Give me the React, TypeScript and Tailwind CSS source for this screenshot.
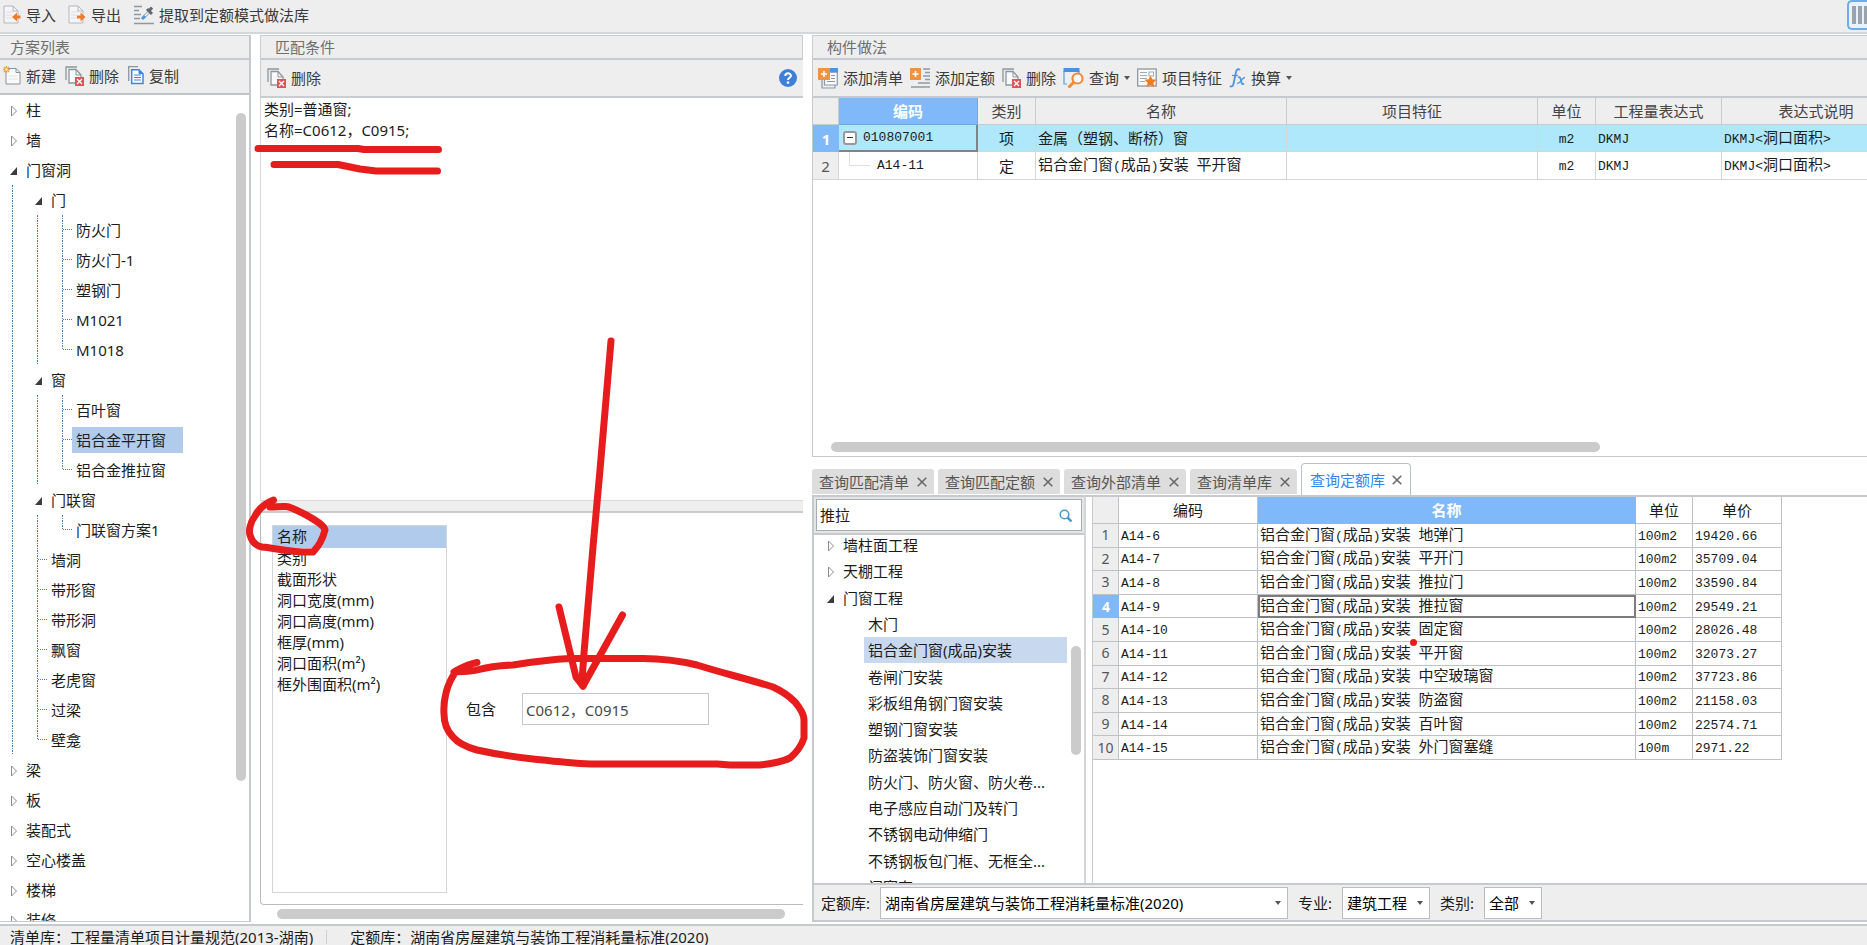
import React from 'react';

type TreeRow = {
  label: string;
  // one letter per indent cell: v = line, t = tee, l = elbow, c = closed arrow, o = open arrow, b = blank
  cells: string;
  active?: boolean;
};

type PriceRow = {
  code: string;
  name: string;
  unit: string;
  price: string;
};

const schemeRows: TreeRow[] = [
  { label: '柱', cells: 'c' },
  { label: '墙', cells: 'c' },
  { label: '门窗洞', cells: 'o' },
  { label: '门', cells: 'vo' },
  { label: '防火门', cells: 'vvt' },
  { label: '防火门-1', cells: 'vvt' },
  { label: '塑钢门', cells: 'vvt' },
  { label: 'M1021', cells: 'vvt' },
  { label: 'M1018', cells: 'vvl' },
  { label: '窗', cells: 'vo' },
  { label: '百叶窗', cells: 'vvt' },
  { label: '铝合金平开窗', cells: 'vvt', active: true },
  { label: '铝合金推拉窗', cells: 'vvl' },
  { label: '门联窗', cells: 'vo' },
  { label: '门联窗方案1', cells: 'vvl' },
  { label: '墙洞', cells: 'vt' },
  { label: '带形窗', cells: 'vt' },
  { label: '带形洞', cells: 'vt' },
  { label: '飘窗', cells: 'vt' },
  { label: '老虎窗', cells: 'vt' },
  { label: '过梁', cells: 'vt' },
  { label: '壁龛', cells: 'vl' },
  { label: '梁', cells: 'c' },
  { label: '板', cells: 'c' },
  { label: '装配式', cells: 'c' },
  { label: '空心楼盖', cells: 'c' },
  { label: '楼梯', cells: 'c' },
  { label: '装修', cells: 'c' },
];

const chapterRows: TreeRow[] = [
  { label: '墙柱面工程', cells: 'c' },
  { label: '天棚工程', cells: 'c' },
  { label: '门窗工程', cells: 'o' },
  { label: '木门', cells: 'bb' },
  { label: '铝合金门窗(成品)安装', cells: 'bb', active: true },
  { label: '卷闸门安装', cells: 'bb' },
  { label: '彩板组角钢门窗安装', cells: 'bb' },
  { label: '塑钢门窗安装', cells: 'bb' },
  { label: '防盗装饰门窗安装', cells: 'bb' },
  { label: '防火门、防火窗、防火卷...', cells: 'bb' },
  { label: '电子感应自动门及转门', cells: 'bb' },
  { label: '不锈钢电动伸缩门', cells: 'bb' },
  { label: '不锈钢板包门框、无框全...', cells: 'bb' },
  { label: '门窗套', cells: 'bb' },
];

const conditions = ['名称', '类别', '截面形状', '洞口宽度(mm)', '洞口高度(mm)', '框厚(mm)', '洞口面积(m²)', '框外围面积(m²)'];

const tabs = ['查询匹配清单', '查询匹配定额', '查询外部清单', '查询清单库', '查询定额库'];

const priceRows: PriceRow[] = [
  { code: 'A14-6', name: '铝合金门窗(成品)安装 地弹门', unit: '100m2', price: '19420.66' },
  { code: 'A14-7', name: '铝合金门窗(成品)安装 平开门', unit: '100m2', price: '35709.04' },
  { code: 'A14-8', name: '铝合金门窗(成品)安装 推拉门', unit: '100m2', price: '33590.84' },
  { code: 'A14-9', name: '铝合金门窗(成品)安装 推拉窗', unit: '100m2', price: '29549.21' },
  { code: 'A14-10', name: '铝合金门窗(成品)安装 固定窗', unit: '100m2', price: '28026.48' },
  { code: 'A14-11', name: '铝合金门窗(成品)安装 平开窗', unit: '100m2', price: '32073.27' },
  { code: 'A14-12', name: '铝合金门窗(成品)安装 中空玻璃窗', unit: '100m2', price: '37723.86' },
  { code: 'A14-13', name: '铝合金门窗(成品)安装 防盗窗', unit: '100m2', price: '21158.03' },
  { code: 'A14-14', name: '铝合金门窗(成品)安装 百叶窗', unit: '100m2', price: '22574.71' },
  { code: 'A14-15', name: '铝合金门窗(成品)安装 外门窗塞缝', unit: '100m', price: '2971.22' },
];

/* ---------- icons ---------- */

const PageIcon = ({ dir }: { dir: 'in' | 'out' }) => (
  <svg width="18" height="20" viewBox="0 0 18 20" fill="none">
    <path d="M1 1h9l5 5v12H1z" fill="#f6f6f8" stroke="#b4b6bd" />
    <path d="M10 1v5h5" stroke="#b4b6bd" />
    <path d="M3 7h7M3 10h6M3 13h6" stroke="#dcdde2" />
    {dir === 'in' ? (
      <path d="M9 12l5-4.500v3h3.500v3H14v3z" fill="#ee7a2c" />
    ) : (
      <path d="M17.500 12l-5-4.500v3H9v3h3.500v3z" fill="#ee7a2c" />
    )}
  </svg>
);

const ExtractIcon = () => (
  <svg width="21" height="20" viewBox="0 0 21 20" fill="none">
    <path d="M1 1.500h8M1 5.500h5M1 9.500h7M1 13.500h6M1 18.500h20" stroke="#8d99a3" strokeWidth="1.500" />
    <path d="M10.500 12.500l5-5" stroke="#8d99a3" strokeWidth="3" />
    <path d="M10.500 12.500l5-5" stroke="#fff" strokeWidth="1.200" />
    <path d="M9 14l3-3" stroke="#4b97e6" strokeWidth="3" />
    <path d="M14 4l5 5M15.500 6.500L19 2.500" stroke="#5d6a74" strokeWidth="3" />
  </svg>
);

const NewIcon = () => (
  <svg width="18" height="19" viewBox="0 0 18 19" fill="none">
    <path d="M3 2.500h10l4 4V18H3z" fill="#fafafa" stroke="#88929b" />
    <path d="M13 2.500v4h4" stroke="#88929b" />
    <path d="M5.500 10h9M5.500 13h9" stroke="#e2e2e4" />
    <path d="M3.500 0v7M0 3.500h7M1 1l5 5M6 1L1 6" stroke="#f5a02c" strokeWidth="1.300" />
    <circle cx="3.500" cy="3.500" r="1.200" fill="#fff3d8" />
  </svg>
);

const DeleteIcon = () => (
  <svg width="19" height="20" viewBox="0 0 19 20" fill="none">
    <path d="M1 14V1h11" stroke="#8d969e" strokeWidth="1.300" />
    <path d="M4 3.500h7l5 5.500v8H4z" fill="#fafafa" stroke="#8d969e" strokeWidth="1.300" />
    <path d="M11 3.500V9h5" stroke="#8d969e" />
    <rect x="10" y="11" width="9" height="9" fill="#dc5458" />
    <path d="M12 13l5 5M17 13l-5 5" stroke="#fff" strokeWidth="1.300" />
  </svg>
);

const CopyIcon = () => (
  <svg width="16" height="19" viewBox="0 0 16 19" fill="none">
    <path d="M.7 15V.7H10" stroke="#8d969e" strokeWidth="1.300" />
    <path d="M3.700 3.700h7.300l4 4V17.500H3.700z" fill="#fff" stroke="#3f86d8" strokeWidth="1.500" />
    <path d="M11 3.700v4h4" fill="#3f86d8" stroke="#3f86d8" />
    <path d="M6 9h7M6 11.500h7M6 14h7" stroke="#3f86d8" strokeWidth="1.200" />
  </svg>
);

const AddListIcon = () => (
  <svg width="20" height="21" viewBox="0 0 20 21" fill="none">
    <path d="M4 11v9h13v-3" stroke="#8a97a3" strokeWidth="1.200" />
    <path d="M6.500 11v6h12.800V4H8z" fill="#fafafa" stroke="#8a97a3" strokeWidth="1.200" />
    <rect x="12" y="0" width="8" height="4.500" fill="#4b94e4" />
    <path d="M13 7.500h4M13 10.500h4M9 13.500h8" stroke="#8a97a3" strokeWidth="1.200" />
    <rect width="12" height="12" fill="#ee9342" />
    <path d="M6 3v6M3 6h6" stroke="#fff" strokeWidth="1.600" />
  </svg>
);

const AddQuotaIcon = () => (
  <svg width="20" height="21" viewBox="0 0 20 21" fill="none">
    <path d="M13 1h7M15 4.500h5M13 8h7M15 11.500h5M8 15h12M1 19h19" stroke="#8f9aa4" strokeWidth="1.500" />
    <rect width="11" height="12" fill="#ee9342" />
    <path d="M5.500 3v6M2.500 6h6" stroke="#fff" strokeWidth="1.600" />
  </svg>
);

const QueryIcon = () => (
  <svg width="21" height="20" viewBox="0 0 21 20" fill="none">
    <path d="M1 3v13h3M16 3v2" stroke="#5a9be2" strokeWidth="1.200" />
    <rect x=".5" y="0" width="16" height="4" fill="#4b8fe2" />
    <circle cx="14.500" cy="10.500" r="5" fill="#fbfbfb" stroke="#ee8a3a" strokeWidth="2.200" />
    <path d="M11 14l-5.500 5.500" stroke="#ee8a3a" strokeWidth="3" />
  </svg>
);

const FeatureIcon = () => (
  <svg width="20" height="20" viewBox="0 0 20 20" fill="none">
    <rect x=".7" y="1" width="18.500" height="17" fill="#fbfbfb" stroke="#8d969e" strokeWidth="1.300" />
    <path d="M3 4.500h7M3 7.500h7M3 10.500h7M3 13.500h5" stroke="#a3abb2" strokeWidth="1.200" />
    <rect x="12" y="4" width="4.500" height="4" stroke="#a3abb2" />
    <path d="M13.500 7.500l1.800 3.800 4.200.5-3.100 2.900.8 4.300-3.700-2.100-3.700 2.100.8-4.300-3.100-2.900 4.200-.5z" fill="#f07c22" />
  </svg>
);

const FxIcon = () => (
  <svg width="17" height="20" viewBox="0 0 17 20" fill="none" stroke="#4f97e4">
    <path d="M11 2C9 .2 7.500 1.300 7 4L4.600 15.500C4 18.300 2.500 19.300.8 18" strokeWidth="1.900" />
    <path d="M3 7.500h6" strokeWidth="1.300" />
    <path d="M9 9.500c2-1 2.500.5 3 3s1 4.500 3 3" strokeWidth="1.800" />
    <path d="M16 9.500c-3-.5-4.500 6.500-8 6" strokeWidth="1.300" />
  </svg>
);

const HelpIcon = () => (
  <svg width="18" height="18" viewBox="0 0 18 18" fill="none">
    <circle cx="9" cy="9" r="9" fill="#3f80d6" />
    <path d="M6.300 7c0-3.600 5.600-3.400 5.600-.3 0 2-2.900 2-2.900 4.300" stroke="#fff" strokeWidth="2" />
    <circle cx="9" cy="13.600" r="1.300" fill="#fff" />
  </svg>
);

const Caret = () => (
  <svg width="6" height="4" viewBox="0 0 6 4" fill="#555">
    <path d="M0 0h6L3 4z" />
  </svg>
);

/* ---------- shared pieces ---------- */

const ToolButton = ({ icon, label, menu }: { icon: React.ReactNode; label: string; menu?: boolean }) => (
  <button type="button" className="flex shrink-0 items-center gap-[5px] whitespace-nowrap text-[#3a3a3a]">
    {icon}
    {label}
    {menu && <Caret />}
  </button>
);

const PanelTitle = ({ title }: { title: string }) => (
  <h2 className="h-[25px] shrink-0 border-b-2 border-t border-b-[#c6cacf] border-t-[#c9ccd0] bg-[#eeeeee] leading-[22px] text-[#6f6f6f]">
    {title}
  </h2>
);

const Guide = ({ kind }: { kind: string }) => (
  <svg width="25" height="30" viewBox="0 0 25 30" fill="none" className="shrink-0">
    {(kind === 'v' || kind === 't') && <path d="M12.500 0v30" stroke="#4a7fb5" strokeDasharray="2 1 1 1" />}
    {kind === 'l' && <path d="M12.500 0v15" stroke="#4a7fb5" strokeDasharray="2 1 1 1" />}
    {(kind === 't' || kind === 'l') && <path d="M13 14.500h9" stroke="#4a7fb5" strokeDasharray="1 1" />}
    {kind === 'c' && <path d="M11.500 11v10l5-5z" stroke="#8c8c8c" />}
    {kind === 'o' && <path d="M17 12v8h-7z" fill="#3c3c3c" />}
  </svg>
);

// latin runs sit in half-width cells, like a bitmap grid font
const GridText = ({ text }: { text: string }) => (
  <>
    {text.split(/([\x20-\x7e]+)/).map((part, i) =>
      /^[\x20-\x7e]+$/.test(part) ? (
        <span key={i} className="font-['Liberation_Mono',monospace] text-[13px] whitespace-pre">
          {part}
        </span>
      ) : (
        part
      ),
    )}
  </>
);

const Picker = ({ id, label, value, width }: { id: string; label: string; value: string; width: string }) => (
  <div className="flex items-center gap-[10px]">
    <label htmlFor={id}>{label}</label>
    <div className="relative">
      <select
        id={id}
        className={`h-[32px] appearance-none border border-[#b9bdc2] bg-white pl-1 pr-4 text-black ${width}`}
      >
        <option>{value}</option>
      </select>
      <span className="pointer-events-none absolute right-[7px] top-[14px]">
        <Caret />
      </span>
    </div>
  </div>
);

/* ---------- panels ---------- */

const SchemePanel = () => (
  <section className="flex w-[251px] shrink-0 flex-col border-b border-r-2 border-[#c6cacf] bg-white">
    <div className="flex shrink-0 flex-col bg-[#eeeeee] [&>h2]:pl-[10px]">
      <PanelTitle title="方案列表" />
    </div>
    <div className="flex h-[35px] shrink-0 items-center gap-[9px] border-b-2 border-[#bfc3c7] bg-[#eeeeee] pb-[2px] pl-[3px]">
      <ToolButton icon={<NewIcon />} label="新建" />
      <ToolButton icon={<DeleteIcon />} label="删除" />
      <ToolButton icon={<CopyIcon />} label="复制" />
    </div>
    <div className="flex min-h-0 flex-1">
      <ul className="min-w-0 flex-1 overflow-hidden">
        {schemeRows.map((row) => (
          <li key={row.label} className="flex h-[30px] items-center">
            {row.cells.split('').map((kind, i) => (
              <Guide key={i} kind={kind} />
            ))}
            <span
              className={
                row.active
                  ? '-ml-[3px] w-[111px] bg-[#b1cbed] pl-1 leading-[26px]'
                  : '-ml-[3px] pl-1 leading-[26px]'
              }
            >
              {row.label}
            </span>
          </li>
        ))}
      </ul>
      <div className="mr-[3px] mt-[18px] h-[668px] w-[10px] rounded-full bg-[#cbcbcb]" />
    </div>
  </section>
);

const ConditionPanel = () => (
  <section className="flex w-[543px] shrink-0 flex-col">
    <div className="flex flex-col border-x border-[#c9ccd0] [&>h2]:pl-[14px]">
      <PanelTitle title="匹配条件" />
    </div>
    <div className="flex h-[38px] shrink-0 items-center justify-between border-b-2 border-l border-[#c9ccd0] bg-[#eeeeee] pl-[6px] pr-[6px]">
      <ToolButton icon={<DeleteIcon />} label="删除" />
      <button type="button" aria-label="帮助">
        <HelpIcon />
      </button>
    </div>
    <div className="h-[402px] shrink-0 border-l border-[#d6d8da] pl-[3px] pt-px leading-[21px]">
      <p>类别=普通窗;</p>
      <p>名称=C0612，C0915;</p>
    </div>
    <div className="h-[13px] shrink-0 border-b-2 border-t border-b-[#c9ccce] border-t-[#d6d8da] bg-[#eeeeee]" />
    <div className="flex min-h-0 flex-1 rounded-bl border-b border-l border-[#b9bdc1] pb-[11px] pl-[11px] pt-[12px]">
      <ul className="w-[175px] border border-[#d3d5d8] leading-[21px]">
        {conditions.map((name, i) => (
          <li key={name} className={i === 0 ? 'bg-[#b1cbed] pb-px pl-1' : 'pl-1'}>
            {name}
          </li>
        ))}
      </ul>
      <div className="mt-[168px] flex h-[32px] items-center gap-[26px] pl-[19px]">
        <label htmlFor="contains">包含</label>
        <input
          id="contains"
          defaultValue="C0612，C0915"
          className="h-[32px] w-[187px] border border-[#c3c7cb] bg-white pl-[3px] text-[#4a4a4a]"
        />
      </div>
    </div>
    <div className="mb-[3px] ml-[17px] mr-[18px] mt-[4px] h-[10px] shrink-0 rounded-full bg-[#cbcbcb]" />
  </section>
);

const headCell = 'border-b border-r border-[#c9ccce] font-normal';
const bodyCell = 'border-b border-r border-[#d4d6d8]';

const MethodTable = () => (
  <table className="w-[1098px] table-fixed border-separate border-spacing-0 whitespace-nowrap">
    <colgroup>
      <col className="w-[26px]" />
      <col className="w-[139px]" />
      <col className="w-[58px]" />
      <col className="w-[251px]" />
      <col className="w-[251px]" />
      <col className="w-[58px]" />
      <col className="w-[126px]" />
      <col className="w-[189px]" />
    </colgroup>
    <thead>
      <tr className="h-[27px] bg-[#eeeeee] text-[#444]">
        <th className={headCell} />
        <th className="border-b border-r border-[#6ea9ec] bg-[#80b9fa] font-bold text-white">编码</th>
        <th className={headCell}>类别</th>
        <th className={headCell}>名称</th>
        <th className={headCell}>项目特征</th>
        <th className={headCell}>单位</th>
        <th className={headCell}>工程量表达式</th>
        <th className={headCell}>表达式说明</th>
      </tr>
    </thead>
    <tbody>
      <tr className="h-[27px] bg-[#aee8fa]">
        <th className="bg-[#80b9fa] font-bold text-white">1</th>
        <td className="border-b-2 border-r-2 border-[#7f8486]">
          <div className="flex items-center gap-[6px] pl-[4px]">
            <button
              type="button"
              aria-label="折叠"
              className="flex h-[14px] w-[14px] items-center justify-center rounded-[3px] border-2 border-[#999] bg-white"
            >
              <span className="h-px w-[6px] bg-[#333]" />
            </button>
            <GridText text="010807001" />
          </div>
        </td>
        <td className={`${bodyCell} text-center`}>项</td>
        <td className={`${bodyCell} pl-[2px]`}>金属（塑钢、断桥）窗</td>
        <td className={bodyCell} />
        <td className={`${bodyCell} text-center`}>
          <GridText text="m2" />
        </td>
        <td className={`${bodyCell} pl-[2px]`}>
          <GridText text="DKMJ" />
        </td>
        <td className={`${bodyCell} pl-[2px]`}>
          <GridText text="DKMJ<洞口面积>" />
        </td>
      </tr>
      <tr className="h-[28px]">
        <th className={`${bodyCell} bg-[#eeeeee] font-normal text-[#555]`}>2</th>
        <td className={bodyCell}>
          <div className="flex items-center gap-[7px] pl-[10px]">
            <svg width="21" height="27" viewBox="0 0 21 27" fill="none">
              <path d="M.5 0v13.500H21" stroke="#dedede" />
            </svg>
            <GridText text="A14-11" />
          </div>
        </td>
        <td className={`${bodyCell} text-center`}>定</td>
        <td className={`${bodyCell} pl-[2px]`}>
          <GridText text="铝合金门窗(成品)安装 平开窗" />
        </td>
        <td className={bodyCell} />
        <td className={`${bodyCell} text-center`}>
          <GridText text="m2" />
        </td>
        <td className={`${bodyCell} pl-[2px]`}>
          <GridText text="DKMJ" />
        </td>
        <td className={`${bodyCell} pl-[2px]`}>
          <GridText text="DKMJ<洞口面积>" />
        </td>
      </tr>
    </tbody>
  </table>
);

const PriceTable = () => (
  <table className="h-[263px] w-[689px] table-fixed border-separate border-spacing-0 whitespace-nowrap leading-[18px]">
    <colgroup>
      <col className="w-[26px]" />
      <col className="w-[139px]" />
      <col className="w-[378px]" />
      <col className="w-[57px]" />
      <col className="w-[89px]" />
    </colgroup>
    <thead>
      <tr className="h-[27px]">
        <th className="border-b border-r border-[#bfc2c4] bg-[#eeeeee]" />
        <th className="border-b border-r border-[#bfc2c4] font-normal">编码</th>
        <th className="border-b border-r border-[#80b9fa] bg-[#80b9fa] font-bold text-white">名称</th>
        <th className="border-b border-r border-[#bfc2c4] font-normal">单位</th>
        <th className="border-b border-r border-[#bfc2c4] font-normal">单价</th>
      </tr>
    </thead>
    <tbody>
      {priceRows.map((row, index) => (
        <tr key={row.code}>
          <th
            className={
              index === 3
                ? 'bg-[#80b9fa] font-bold text-[14px] text-white'
                : 'border-b border-r border-[#bfc2c4] bg-[#eeeeee] font-normal text-[14px] text-[#555]'
            }
          >
            {index + 1}
          </th>
          <td className="border-b border-r border-[#bfc2c4] pl-[2px]">
            <GridText text={row.code} />
          </td>
          <td
            className={
              index === 3
                ? 'pl-[2px] outline-2 -outline-offset-2 outline-[#7d7d7d]'
                : 'border-b border-r border-[#bfc2c4] pl-[2px]'
            }
          >
            <GridText text={row.name} />
          </td>
          <td className="border-b border-r border-[#bfc2c4] pl-[2px]">
            <GridText text={row.unit} />
          </td>
          <td className="border-b border-r border-[#bfc2c4] pl-[2px]">
            <GridText text={row.price} />
          </td>
        </tr>
      ))}
    </tbody>
  </table>
);

const QueryTabs = () => (
  <div className="flex h-[40px] shrink-0 items-end gap-[4px] border-b-2 border-[#c6cacf]">
    {tabs.map((tab, index) => (
      <div
        key={tab}
        className={
          index === 4
            ? 'flex h-[32px] items-center gap-[7px] rounded-t border border-b-0 border-[#b9c0c7] bg-white px-[8px] text-[#2f86f6]'
            : 'mb-px flex h-[25px] items-center gap-[8px] rounded-t-[3px] bg-[#dddddd] px-[7px] text-[#555]'
        }
      >
        <button type="button">{tab}</button>
        <button type="button" aria-label="关闭">
          <svg width="10" height="10" viewBox="0 0 10 10" fill="none" stroke="#666" strokeWidth="1.500">
            <path d="M.7 .7l8.600 8.600M9.300 .7L.7 9.300" />
          </svg>
        </button>
      </div>
    ))}
  </div>
);

const MethodPanel = () => (
  <section className="flex min-w-0 flex-1 flex-col overflow-hidden">
    <div className="flex shrink-0 flex-col border-l border-[#c9ccd0] [&>h2]:pl-[14px]">
      <PanelTitle title="构件做法" />
    </div>
    <div className="flex h-[38px] shrink-0 items-center gap-[7px] border-b-2 border-l border-[#c6cacf] bg-[#eeeeee] pl-[5px]">
      <ToolButton icon={<AddListIcon />} label="添加清单" />
      <ToolButton icon={<AddQuotaIcon />} label="添加定额" />
      <ToolButton icon={<DeleteIcon />} label="删除" />
      <ToolButton icon={<QueryIcon />} label="查询" menu />
      <ToolButton icon={<FeatureIcon />} label="项目特征" />
      <ToolButton icon={<FxIcon />} label="换算" menu />
    </div>
    <div className="flex h-[359px] shrink-0 flex-col justify-between border-b border-l border-[#c6cacf] pb-[4px]">
      <MethodTable />
      <div className="ml-[18px] h-[10px] w-[73%] rounded-full bg-[#cbcbcb]" />
    </div>
    <QueryTabs />
    <div className="flex min-h-0 flex-1 border-l-2 border-[#c6cacf]">
      <div className="flex w-[272px] shrink-0 flex-col border-r-2 border-[#d3d5d8]">
        <div className="shrink-0 border-b-2 border-[#c6cacf] bg-[#e4e4e4] p-[2px]">
          <div className="flex h-[32px] items-center border border-[#a9adb1] bg-white pl-[3px] pr-[9px]">
            <input aria-label="搜索" defaultValue="推拉" className="min-w-0 flex-1 bg-transparent outline-none" />
            <svg width="13" height="13" viewBox="0 0 13 13" fill="none" stroke="#4a9ad0">
              <circle cx="5.500" cy="5.500" r="4.300" strokeWidth="1.600" />
              <path d="M8.500 8.500l4 4" strokeWidth="2.500" />
            </svg>
          </div>
        </div>
        <div className="flex min-h-0 flex-1 overflow-hidden">
          <ul className="-mt-[3px] flex h-[368px] min-w-0 flex-1 flex-col pl-[3px]">
            {chapterRows.map((row) => (
              <li key={row.label} className="flex min-h-0 flex-1 items-center">
                {row.cells.split('').map((kind, i) => (
                  <Guide key={i} kind={kind} />
                ))}
                <span
                  className={
                    row.active
                      ? '-ml-[3px] mr-[4px] flex-1 whitespace-nowrap bg-[#c8d8ef] pl-1 leading-[26px]'
                      : '-ml-[3px] whitespace-nowrap pl-1 leading-[26px]'
                  }
                >
                  {row.label}
                </span>
              </li>
            ))}
          </ul>
          <div className="mr-[3px] mt-[111px] h-[109px] w-[10px] rounded-full bg-[#cbcbcb]" />
        </div>
      </div>
      <div className="ml-[6px] min-w-0 flex-1 border-l border-[#c6cacf]">
        <PriceTable />
      </div>
    </div>
    <div className="flex h-[39px] shrink-0 items-center gap-[10px] border-y-2 border-l-2 border-[#c6cacf] bg-[#eeeeee] pl-[7px]">
      <Picker id="library" label="定额库:" value="湖南省房屋建筑与装饰工程消耗量标准(2020)" width="w-[408px]" />
      <Picker id="major" label="专业:" value="建筑工程" width="w-[88px]" />
      <Picker id="kind" label="类别:" value="全部" width="w-[58px]" />
    </div>
  </section>
);

// red pen marks over the whole window
const PenMarks = () => (
  <svg
    width="1867"
    height="945"
    viewBox="0 0 1867 945"
    fill="none"
    stroke="#e71c1c"
    strokeWidth="7"
    strokeLinecap="round"
    strokeLinejoin="round"
    className="pointer-events-none absolute left-0 top-0 max-w-none"
  >
    <path d="M258 148.500H358L364 149.500H438.500" />
    <path d="M274 164.500H338L360 169L376 171H437.500" />
    <path d="M273.500 500C266 503 259 508 255 516C249 524 249 532 250 535C252 542 257 546 262 547C280 549 296 553 313 552C319 546 323 538 325 530C324 525 315 520 308 516C300 512 292 507 286 506.500C280 506 276 507 270 507" />
    <path d="M611 341L600 470L593 547L584 653L582 681" />
    <path d="M559 607L576 677L583 686" />
    <path d="M622.500 615L583 686" />
    <path d="M477 662.500C468 664 463 667 454 672C462 671 470 672 477 670C488 667 498 665.500 513 665C532 662 550 659.500 570 658.500H643C664 658.500 680 661 697 665C722 673 748 679 773 687C784 692 790 697 795 702C800 708 804 714 804 720V738C801 747 796 753 790 758C780 763 770 764 760 765H730L717 764H590C570 763 552 761 533 759C514 757 495 754 477 750C466 747 458 743 453 737C446 730 444 722 444 714C443 700 447 684 455 673L462 668" />
    <circle cx="1413.500" cy="642.500" r="3.500" fill="#e71c1c" stroke="none" />
  </svg>
);

export default function App() {
  return (
    <div className="relative flex h-screen flex-col overflow-hidden bg-white font-['Noto_Sans','Noto_Sans_CJK_SC',sans-serif] text-[15px] leading-[22px] text-[#1c1c1c]">
      <header className="flex h-[34px] shrink-0 items-center justify-between border-b-2 border-[#d3d6da] bg-[#eeeeee] pl-[3px]">
        <div className="flex items-center gap-[12px] pb-[2px]">
          <ToolButton icon={<PageIcon dir="in" />} label="导入" />
          <ToolButton icon={<PageIcon dir="out" />} label="导出" />
          <ToolButton icon={<ExtractIcon />} label="提取到定额模式做法库" />
        </div>
        <button
          type="button"
          aria-label="面板"
          className="mb-[2px] flex h-[30px] w-[20px] items-center gap-[2px] rounded-l-[5px] border-2 border-r-0 border-[#6aaeee] bg-[#e9f2fc] pl-[3px]"
        >
          <span className="h-[18px] w-[4px] bg-[#9aa3ab]" />
          <span className="h-[18px] w-[4px] bg-[#9aa3ab]" />
          <span className="h-[18px] w-[3px] bg-[#9aa3ab]" />
        </button>
      </header>
      <main className="mt-px flex min-h-0 flex-1 gap-[9px] pb-[2px]">
        <SchemePanel />
        <ConditionPanel />
        <MethodPanel />
      </main>
      <footer className="flex h-[21px] shrink-0 items-start border-t-2 border-[#c6cacf] bg-[#eeeeee] pl-[10px] leading-[22px]">
        <span>清单库：工程量清单项目计量规范(2013-湖南)</span>
        <span className="ml-[13px] mt-[4px] h-[14px] w-px bg-[#cfcfcf]" />
        <span className="ml-[23px]">定额库：湖南省房屋建筑与装饰工程消耗量标准(2020)</span>
      </footer>
      <PenMarks />
    </div>
  );
}
